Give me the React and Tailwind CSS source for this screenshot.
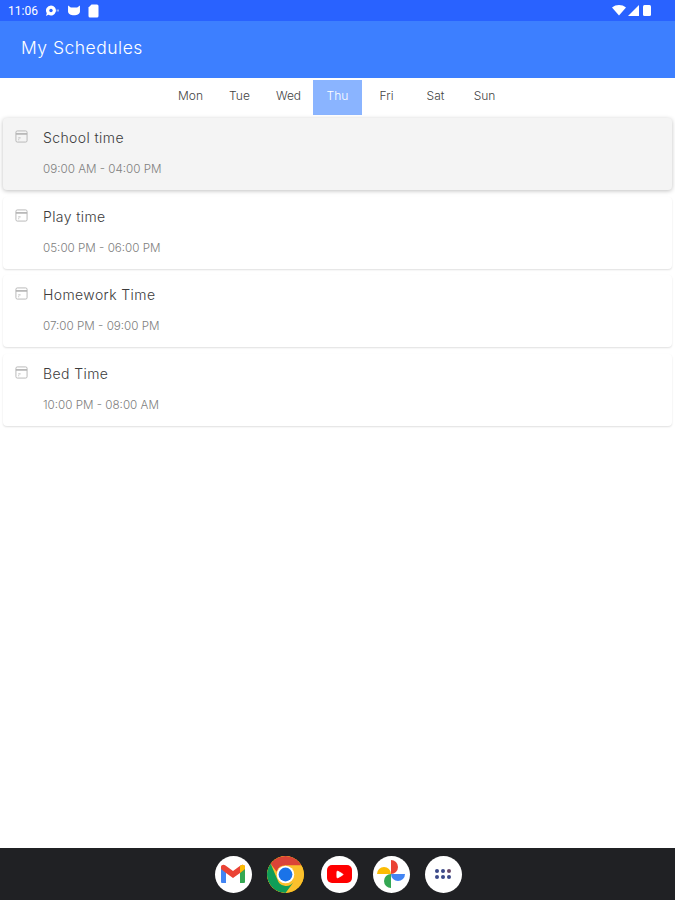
import React from 'react'
import { Play } from 'lucide-react'

const DAYS = ['Mon', 'Tue', 'Wed', 'Thu', 'Fri', 'Sat', 'Sun']

const SCHEDULES = [
  { title: 'School time', time: '09:00 AM - 04:00 PM', active: true },
  { title: 'Play time', time: '05:00 PM - 06:00 PM' },
  { title: 'Homework Time', time: '07:00 PM - 09:00 PM' },
  { title: 'Bed Time', time: '10:00 PM - 08:00 AM' },
]

function CalendarIcon() {
  return (
    <svg width="13" height="13" viewBox="0 0 14 14" fill="none" stroke="#b4b4b4" strokeWidth="1" className="shrink-0 mr-[1px]">
      <rect x="1" y="1" width="12" height="12" rx="1.5" />
      <path d="M1 4.2h12" strokeWidth="1.8" />
      <path d="M3.500 8.500h2.500M3.500 10.500h1" />
    </svg>
  )
}

function StatusBar() {
  return (
    <div className="h-[21px] bg-[#2962ff] flex items-center pl-[8px] pr-[24px] text-white">
      <span className="text-[12px] leading-none font-['Roboto',sans-serif] w-[37px]">11:06</span>
      <div className="flex items-center gap-[7px]">
        <svg width="15" height="12" viewBox="0 0 15 12" fill="white">
          <path d="M6 0.5a5 5 0 1 1-2.6 9.3L1 11l.8-2.8A5 5 0 0 1 6 .5z" />
          <circle cx="6" cy="5.5" r="1.7" fill="#2962ff" />
          <rect x="11.500" y="4.500" width="2.500" height="2" opacity="0.5" />
        </svg>
        <svg width="14" height="11" viewBox="0 0 15 12" fill="white">
          <path d="M1 0.5l3 2.2h7l3-2.2v6.500c0 2.500-3 4.200-6.500 4.200S1 9.500 1 7z" />
        </svg>
        <svg width="11" height="14" viewBox="0 0 11 14" fill="white">
          <path d="M3.500 0.500H9a1.500 1.500 0 0 1 1.500 1.500v10A1.500 1.500 0 0 1 9 13.500H2A1.500 1.500 0 0 1 .5 12V3.500z" />
        </svg>
      </div>
      <div className="ml-auto flex items-center gap-[2px]">
        <svg width="14" height="11" viewBox="0 0 14 11" fill="white">
          <path d="M0 2.500C4-.8 10-.8 14 2.500L7 10.500z" />
        </svg>
        <svg width="11" height="11" viewBox="0 0 11 11" fill="white">
          <path d="M11 0v11H0z" />
        </svg>
        <div className="ml-[2px] w-[8px] h-[11px] bg-white rounded-[1.500px]" />
      </div>
    </div>
  )
}

function ScheduleCard({ item }) {
  return (
    <div
      className={`h-[72px] mx-[3px] rounded-[4px] flex pl-[12px] pt-[12px] ${
        item.active
          ? 'bg-[#f4f4f4] shadow-[0_1px_4px_rgba(0,0,0,0.25)]'
          : 'bg-white shadow-[0_1px_2px_rgba(0,0,0,0.13)]'
      }`}
    >
      <CalendarIcon />
      <div className="ml-[14px]">
        <div className="text-[14px] leading-[16px] tracking-[0.4px] font-light text-[#3c3c3c]">{item.title}</div>
        <div className="mt-[16px] text-[11.650px] leading-[14px] font-light text-[#808080]">{item.time}</div>
      </div>
    </div>
  )
}

function DockIcon({ children, className = 'bg-white' }) {
  return (
    <div className={`w-[37px] h-[37px] rounded-full flex items-center justify-center overflow-hidden ${className}`}>
      {children}
    </div>
  )
}

function Dock() {
  return (
    <div className="h-[52px] bg-[#202124] flex items-center justify-center gap-[15px] pl-[1px]">
      <DockIcon>
        <svg width="26" height="20" viewBox="0 0 26 20">
          <path d="M1 4v14a1 1 0 0 0 1 1h4V8z" fill="#4285f4" />
          <path d="M25 4v14a1 1 0 0 1-1 1h-4V8z" fill="#34a853" />
          <path d="M6 9L1 5V3c0-2.500 3-3 4.500-1.500L13 7l7.500-5.500C22 0 25 .5 25 3v2l-5 4-7 5z" fill="#ea4335" />
          <path d="M20 2v7l5-4V3c0-2.500-3-3-5-1z" fill="#fbbc04" />
        </svg>
      </DockIcon>
      <DockIcon className="bg-[#fbbc04]">
        <svg width="37" height="37" viewBox="0 0 36 36">
          <circle cx="18" cy="18" r="18" fill="#fbc02d" />
          <path d="M18 0a18 18 0 0 1 15.600 9H18a9 9 0 0 0-8.600 6.300L3.500 7.500A18 18 0 0 1 18 0z" fill="#db4437" />
          <path d="M3.500 7.300A18 18 0 0 0 18 36l7.800-10.500a9 9 0 0 1-15.800-3z" fill="#0f9d58" />
          <circle cx="18" cy="18" r="8.500" fill="white" />
          <circle cx="18" cy="18" r="6.700" fill="#1a73e8" />
        </svg>
      </DockIcon>
      <div className="ml-[2px]">
        <DockIcon>
          <div className="w-[25px] h-[18px] rounded-[5px] bg-[#f00] flex items-center justify-center">
            <Play size={9} fill="white" stroke="white" />
          </div>
        </DockIcon>
      </div>
      <DockIcon>
        <svg width="28" height="28" viewBox="0 0 28 28">
          <path d="M14 14V0a7 7 0 0 1 0 14z" fill="#ea4335" />
          <path d="M14 14h14a7 7 0 0 1-14 0z" fill="#4285f4" />
          <path d="M14 14v14a7 7 0 0 1 0-14z" fill="#34a853" />
          <path d="M14 14H0a7 7 0 0 1 14 0z" fill="#fbbc04" />
        </svg>
      </DockIcon>
      <DockIcon>
        <div className="grid grid-cols-3 gap-[2px]">
          {['#3c4a8a', '#3c4a8a', '#6a4a6a', '#3c4a8a', '#3c4a8a', '#3c4a8a'].map((c, i) => (
            <div key={i} className="w-[4px] h-[4px] rounded-full" style={{ backgroundColor: c }} />
          ))}
        </div>
      </DockIcon>
    </div>
  )
}

export default function App() {
  return (
    <div className="w-[675px] h-[900px] bg-white flex flex-col overflow-hidden font-['Inter',sans-serif]">
      <StatusBar />
      <div className="h-[57px] bg-[#3d7fff] flex items-center pl-[21px] pb-[2px] text-white text-[17.500px] tracking-[0.5px] font-light">
        My Schedules
      </div>
      <div className="flex justify-center h-[37px] pt-[2px]">
        {DAYS.map(day => (
          <div
            key={day}
            className={`w-[49px] flex items-center justify-center pb-[4px] text-[12px] font-light ${
              day === 'Thu' ? 'bg-[#8ab4ff] text-white' : 'text-[#444444]'
            }`}
          >
            {day}
          </div>
        ))}
      </div>
      <div className="flex-1 flex flex-col gap-[6.670px] pt-[3px]">
        {SCHEDULES.map(item => (
          <ScheduleCard key={item.title} item={item} />
        ))}
      </div>
      <Dock />
    </div>
  )
}
